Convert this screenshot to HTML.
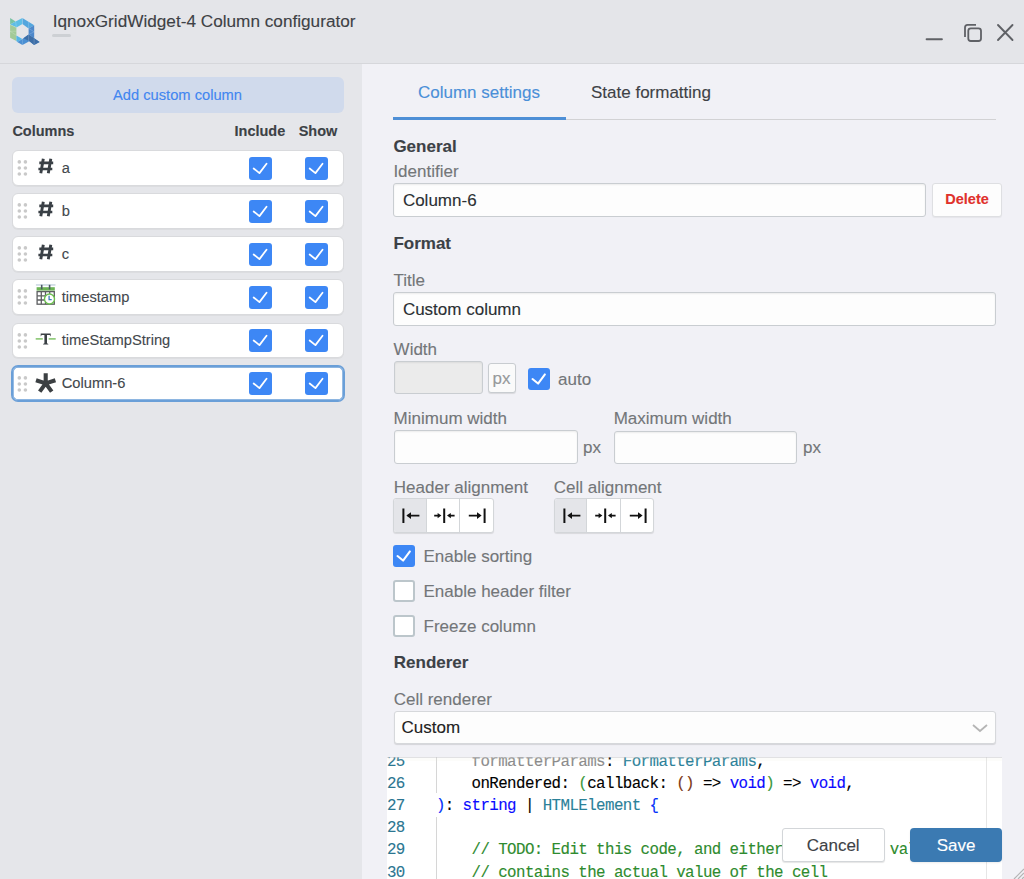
<!DOCTYPE html>
<html><head><meta charset="utf-8">
<style>
*{box-sizing:border-box;margin:0;padding:0}
html,body{width:1024px;height:879px;overflow:hidden;background:#f1f1f6;font-family:"Liberation Sans",sans-serif;color:#3c4146}
body div{-webkit-text-stroke:0.12px currentColor}
.abs{position:absolute}
#titlebar{position:absolute;left:0;top:0;width:1024px;height:64px;background:#e4e5e9;border-bottom:1px solid #d6d7db}
#left{position:absolute;left:0;top:64px;width:362px;height:815px;background:#e5e6ea}
#right{position:absolute;left:362.5px;top:64px;width:661.5px;height:815px;background:#f1f1f6}
.t17{font-size:17px;white-space:nowrap}
.lbl{color:#737679}
.h{font-weight:bold;color:#3c4146}
.row{position:absolute;left:12.3px;width:331.4px;height:35.4px;background:#fff;border:1px solid #d9dadd;border-radius:6px;box-shadow:0 1px 0 #dcdde0}
.row.sel{border:1px solid #6a9fd8;box-shadow:0 0 0 1px #6a9fd8,inset 0 0 0 0.7px #6a9fd8}
.dots{position:absolute;left:4.1px;top:9.1px;width:10px;height:16px}
.dots i{position:absolute;width:3.6px;height:3.6px;border-radius:50%;background:#c9c9c9}
.cb{position:absolute;width:22.8px;height:22.8px;background:#3d87f5;border-radius:3px}
.cb svg{position:absolute;left:0;top:0}
.rlab{position:absolute;left:48.4px;top:9.7px;line-height:14.7px;font-size:14.7px;color:#43484d;white-space:nowrap}
.inp{position:absolute;background:#fdfdfd;border:1px solid #c9cdd1;border-radius:3px;box-shadow:inset 0 1px 2px rgba(0,0,0,.07)}
.ucb{position:absolute;width:22px;height:22px;background:#fff;border:2px solid #bcc6cb;border-radius:3px}
</style></head>
<body>
<div id="titlebar">
  <svg class="abs" style="left:0;top:0" width="50" height="50" viewBox="0 0 50 50">
<polygon points="10.1,18.1 15.6,21.6 10.1,24.6" fill="#79c3a3"/>
<polygon points="10.1,24.6 15.6,21.6 22.4,18.0 22.4,24.0 16.4,27.4" fill="#5dbde6"/>
<polygon points="22.4,18.0 34.2,25.2 28.6,28.4 22.4,24.0" fill="#53a6de"/>
<polygon points="34.2,25.2 34.2,38.3 28.6,34.6 28.6,28.4" fill="#4d88cb"/>
<polygon points="10.1,24.6 16.4,27.4 16.4,41.0 10.1,37.8" fill="#a2ca97"/>
<polygon points="16.4,35.4 22.4,38.9 17.3,42.1 16.4,41.0" fill="#55b6e6"/>
<polygon points="22.4,38.9 28.6,34.6 34.2,38.3 39.6,42.1 34.1,44.9 29.4,41.3 22.4,45 17.3,42.1" fill="#4a8fd3"/>
<polygon points="23.4,38.3 28.6,34.6 34.2,38.3 39.6,42.1 34.1,44.9 29.4,41.3" fill="#3d6ea7"/>
<g stroke="rgba(255,255,255,.35)" stroke-width=".5" fill="none">
<path d="M10.1 24.6 L16.4 27.4 M15.6 21.6 L16.4 27.4 M22.4 18 V24 M28.6 21.6 V28.4 M28.6 28.4 L34.2 31.8 M28.6 34.6 L34.2 31.8 M28.6 34.6 V41.5 M34.1 38.3 V44.9 M22.4 38.9 V45 M16.4 31.2 L10.1 31.2 M10.1 31.2 L16.4 35.4"/>
</g>
</svg>
  <div class="abs" style="left:52.7px;top:13.1px;font-size:17.2px;line-height:17.2px;color:#3e4145;white-space:nowrap">IqnoxGridWidget-4 Column configurator</div>
  <div class="abs" style="left:52px;top:34px;width:19px;height:2.5px;border-radius:2px;background:#cdd0d4"></div>
  <svg class="abs" style="left:920px;top:18px" width="100" height="30" viewBox="0 0 100 30">
    <path d="M6.6 21.3H21.9" stroke="#5f6166" stroke-width="2" stroke-linecap="round"/>
    <path d="M45 19V9.5a2.6 2.6 0 0 1 2.6-2.6H56" stroke="#5f6166" stroke-width="1.8" fill="none"/>
    <rect x="48.3" y="10.3" width="12.7" height="12.7" rx="2.5" stroke="#5f6166" stroke-width="1.8" fill="none"/>
    <path d="M78 7 L92.5 22 M92.5 7 L78 22" stroke="#5f6166" stroke-width="1.9" stroke-linecap="round"/>
  </svg>
</div>
<div id="left"></div>
<div class="abs" style="left:12px;top:77px;width:332px;height:36px;background:#d0daec;border-radius:6px"></div>
<div class="abs" style="left:11.5px;top:87.5px;width:332px;text-align:center;font-size:14.7px;line-height:14.7px;color:#4286f0;white-space:nowrap">Add custom column</div>
<div class="abs h" style="left:12.4px;top:123.7px;font-size:14.5px;line-height:14.5px">Columns</div>
<div class="abs h" style="left:234.5px;top:123.7px;font-size:14.5px;line-height:14.5px">Include</div>
<div class="abs h" style="left:298.7px;top:123.7px;font-size:14.5px;line-height:14.5px">Show</div>
<div class="row" style="top:150.3px"><svg class="abs" style="left:0;top:0" width="20" height="35" viewBox="0 0 20 35"><g fill="#c9c9c9"><circle cx="6.3" cy="10.9" r="1.8"/><circle cx="12.4" cy="10.9" r="1.8"/><circle cx="6.3" cy="16.95" r="1.8"/><circle cx="12.4" cy="16.95" r="1.8"/><circle cx="6.3" cy="23" r="1.8"/><circle cx="12.4" cy="23" r="1.8"/></g></svg><svg class="abs" style="left:0;top:0;overflow:visible" width="50" height="35" viewBox="13.3 151.5 50 35"><path d="M43.6 159.2 L41.1 173.8 M51.1 159.2 L48.6 173.8" stroke="#3a4046" stroke-width="2.9" stroke-linecap="butt"/><path d="M39.6 163.4 H53.5 M38.7 169.5 H52.6" stroke="#3a4046" stroke-width="2.7" stroke-linecap="butt"/></svg><div class="rlab">a</div><div class="cb" style="left:236px;top:5.6px"><svg width="22.8" height="22.8" viewBox="0 0 22.5 22.5"><path d="M4.6 11.3 L10.3 15.9 L17.3 6.6" stroke="#fff" stroke-width="1.75" fill="none" stroke-linecap="round" stroke-linejoin="round"/></svg></div><div class="cb" style="left:291.6px;top:5.6px"><svg width="22.8" height="22.8" viewBox="0 0 22.5 22.5"><path d="M4.6 11.3 L10.3 15.9 L17.3 6.6" stroke="#fff" stroke-width="1.75" fill="none" stroke-linecap="round" stroke-linejoin="round"/></svg></div></div>
<div class="row" style="top:193.35px"><svg class="abs" style="left:0;top:0" width="20" height="35" viewBox="0 0 20 35"><g fill="#c9c9c9"><circle cx="6.3" cy="10.9" r="1.8"/><circle cx="12.4" cy="10.9" r="1.8"/><circle cx="6.3" cy="16.95" r="1.8"/><circle cx="12.4" cy="16.95" r="1.8"/><circle cx="6.3" cy="23" r="1.8"/><circle cx="12.4" cy="23" r="1.8"/></g></svg><svg class="abs" style="left:0;top:0;overflow:visible" width="50" height="35" viewBox="13.3 194.5 50 35"><path d="M43.6 202.2 L41.1 216.8 M51.1 202.2 L48.6 216.8" stroke="#3a4046" stroke-width="2.9" stroke-linecap="butt"/><path d="M39.6 206.4 H53.5 M38.7 212.5 H52.6" stroke="#3a4046" stroke-width="2.7" stroke-linecap="butt"/></svg><div class="rlab">b</div><div class="cb" style="left:236px;top:5.6px"><svg width="22.8" height="22.8" viewBox="0 0 22.5 22.5"><path d="M4.6 11.3 L10.3 15.9 L17.3 6.6" stroke="#fff" stroke-width="1.75" fill="none" stroke-linecap="round" stroke-linejoin="round"/></svg></div><div class="cb" style="left:291.6px;top:5.6px"><svg width="22.8" height="22.8" viewBox="0 0 22.5 22.5"><path d="M4.6 11.3 L10.3 15.9 L17.3 6.6" stroke="#fff" stroke-width="1.75" fill="none" stroke-linecap="round" stroke-linejoin="round"/></svg></div></div>
<div class="row" style="top:236.4px"><svg class="abs" style="left:0;top:0" width="20" height="35" viewBox="0 0 20 35"><g fill="#c9c9c9"><circle cx="6.3" cy="10.9" r="1.8"/><circle cx="12.4" cy="10.9" r="1.8"/><circle cx="6.3" cy="16.95" r="1.8"/><circle cx="12.4" cy="16.95" r="1.8"/><circle cx="6.3" cy="23" r="1.8"/><circle cx="12.4" cy="23" r="1.8"/></g></svg><svg class="abs" style="left:0;top:0;overflow:visible" width="50" height="35" viewBox="13.3 237.5 50 35"><path d="M43.6 245.2 L41.1 259.8 M51.1 245.2 L48.6 259.8" stroke="#3a4046" stroke-width="2.9" stroke-linecap="butt"/><path d="M39.6 249.4 H53.5 M38.7 255.5 H52.6" stroke="#3a4046" stroke-width="2.7" stroke-linecap="butt"/></svg><div class="rlab">c</div><div class="cb" style="left:236px;top:5.6px"><svg width="22.8" height="22.8" viewBox="0 0 22.5 22.5"><path d="M4.6 11.3 L10.3 15.9 L17.3 6.6" stroke="#fff" stroke-width="1.75" fill="none" stroke-linecap="round" stroke-linejoin="round"/></svg></div><div class="cb" style="left:291.6px;top:5.6px"><svg width="22.8" height="22.8" viewBox="0 0 22.5 22.5"><path d="M4.6 11.3 L10.3 15.9 L17.3 6.6" stroke="#fff" stroke-width="1.75" fill="none" stroke-linecap="round" stroke-linejoin="round"/></svg></div></div>
<div class="row" style="top:279.45px"><svg class="abs" style="left:0;top:0" width="20" height="35" viewBox="0 0 20 35"><g fill="#c9c9c9"><circle cx="6.3" cy="10.9" r="1.8"/><circle cx="12.4" cy="10.9" r="1.8"/><circle cx="6.3" cy="16.95" r="1.8"/><circle cx="12.4" cy="16.95" r="1.8"/><circle cx="6.3" cy="23" r="1.8"/><circle cx="12.4" cy="23" r="1.8"/></g></svg><svg class="abs" style="left:0;top:0;overflow:visible" width="50" height="35" viewBox="13.3 280.5 50 35"><g transform="translate(0,-0.5)"><rect x="36.2" y="285.2" width="19.6" height="1.5" fill="#c9d6e2"/>
<rect x="36.9" y="288.2" width="18.2" height="3.4" fill="#6cb455"/>
<rect x="41.2" y="285.8" width="1.6" height="4.6" fill="#4a5a62"/><rect x="49.1" y="285.8" width="1.6" height="4.6" fill="#4a5a62"/>
<rect x="37.4" y="292.6" width="17.2" height="12.6" fill="#fff" stroke="#5d5f61" stroke-width="1.3"/>
<path d="M37.4 296.9 H54.6 M37.4 301 H54.6 M41.6 292.6 V305.2 M45.8 292.6 V305.2 M50 292.6 V305.2" stroke="#5d5f61" stroke-width="1.3"/>
<circle cx="49.8" cy="300" r="5" fill="#fff" stroke="#6bbf4e" stroke-width="1.4"/>
<path d="M49.4 296.8 V300.6 H52" stroke="#3d7fb8" stroke-width="1.3" fill="none"/></g></svg><div class="rlab">timestamp</div><div class="cb" style="left:236px;top:5.6px"><svg width="22.8" height="22.8" viewBox="0 0 22.5 22.5"><path d="M4.6 11.3 L10.3 15.9 L17.3 6.6" stroke="#fff" stroke-width="1.75" fill="none" stroke-linecap="round" stroke-linejoin="round"/></svg></div><div class="cb" style="left:291.6px;top:5.6px"><svg width="22.8" height="22.8" viewBox="0 0 22.5 22.5"><path d="M4.6 11.3 L10.3 15.9 L17.3 6.6" stroke="#fff" stroke-width="1.75" fill="none" stroke-linecap="round" stroke-linejoin="round"/></svg></div></div>
<div class="row" style="top:322.5px"><svg class="abs" style="left:0;top:0" width="20" height="35" viewBox="0 0 20 35"><g fill="#c9c9c9"><circle cx="6.3" cy="10.9" r="1.8"/><circle cx="12.4" cy="10.9" r="1.8"/><circle cx="6.3" cy="16.95" r="1.8"/><circle cx="12.4" cy="16.95" r="1.8"/><circle cx="6.3" cy="23" r="1.8"/><circle cx="12.4" cy="23" r="1.8"/></g></svg><svg class="abs" style="left:0;top:0;overflow:visible" width="50" height="35" viewBox="13.3 323.5 50 35"><path d="M36 338.4 H43.1 M49 338.4 H56" stroke="#93cb7e" stroke-width="1.8"/>
<path d="M41 332.9 H51 V336 L50 334.4 H47.3 V342.8 L48.6 343.4 V343.9 H43.4 V343.4 L44.7 342.8 V334.4 H42 L41 336Z" fill="#3a3f44"/></svg><div class="rlab">timeStampString</div><div class="cb" style="left:236px;top:5.6px"><svg width="22.8" height="22.8" viewBox="0 0 22.5 22.5"><path d="M4.6 11.3 L10.3 15.9 L17.3 6.6" stroke="#fff" stroke-width="1.75" fill="none" stroke-linecap="round" stroke-linejoin="round"/></svg></div><div class="cb" style="left:291.6px;top:5.6px"><svg width="22.8" height="22.8" viewBox="0 0 22.5 22.5"><path d="M4.6 11.3 L10.3 15.9 L17.3 6.6" stroke="#fff" stroke-width="1.75" fill="none" stroke-linecap="round" stroke-linejoin="round"/></svg></div></div>
<div class="row sel" style="top:365.55px"><svg class="abs" style="left:0;top:0" width="20" height="35" viewBox="0 0 20 35"><g fill="#c9c9c9"><circle cx="6.3" cy="10.9" r="1.8"/><circle cx="12.4" cy="10.9" r="1.8"/><circle cx="6.3" cy="16.95" r="1.8"/><circle cx="12.4" cy="16.95" r="1.8"/><circle cx="6.3" cy="23" r="1.8"/><circle cx="12.4" cy="23" r="1.8"/></g></svg><svg class="abs" style="left:0;top:0;overflow:visible" width="50" height="35" viewBox="13.3 366.5 50 35"><path d="M46.00 382.90 L46.00 372.70 M46.00 382.90 L55.70 379.75 M46.00 382.90 L52.00 391.15 M46.00 382.90 L40.00 391.15 M46.00 382.90 L36.30 379.75 " stroke="#3c4043" stroke-width="4.1" stroke-linecap="butt"/><circle cx="46.0" cy="382.9" r="2.5" fill="#3c4043"/></svg><div class="rlab">Column-6</div><div class="cb" style="left:236px;top:5.6px"><svg width="22.8" height="22.8" viewBox="0 0 22.5 22.5"><path d="M4.6 11.3 L10.3 15.9 L17.3 6.6" stroke="#fff" stroke-width="1.75" fill="none" stroke-linecap="round" stroke-linejoin="round"/></svg></div><div class="cb" style="left:291.6px;top:5.6px"><svg width="22.8" height="22.8" viewBox="0 0 22.5 22.5"><path d="M4.6 11.3 L10.3 15.9 L17.3 6.6" stroke="#fff" stroke-width="1.75" fill="none" stroke-linecap="round" stroke-linejoin="round"/></svg></div></div>
<div id="right"></div>
<div class="abs " style="left:418px;top:84.4px;font-size:17px;line-height:17px;white-space:nowrap;color:#4a8fd8">Column settings</div>
<div class="abs " style="left:591px;top:84.4px;font-size:17px;line-height:17px;white-space:nowrap;color:#3e4246">State formatting</div>
<div class="abs" style="left:393px;top:118.6px;width:603px;height:1.4px;background:#d2d2d4"></div>
<div class="abs" style="left:393px;top:116.8px;width:173px;height:3.3px;background:#4e8fd6"></div>
<div class="abs h" style="left:393.4px;top:137.6px;font-size:17px;line-height:17px;white-space:nowrap;">General</div>
<div class="abs lbl" style="left:393.4px;top:162.6px;font-size:17px;line-height:17px;white-space:nowrap;">Identifier</div>
<div class="inp" style="left:393px;top:183.3px;width:532.5px;height:34px"></div>
<div class="abs " style="left:402.9px;top:191.6px;font-size:17px;line-height:17px;white-space:nowrap;color:#2b2f33">Column-6</div>
<div class="inp" style="left:932.4px;top:183.3px;width:70px;height:34px;box-shadow:0 1px 1px rgba(0,0,0,.05);border-color:#dedfe2"></div>
<div class="abs " style="left:945.3px;top:191.5px;font-size:14.5px;line-height:14.5px;white-space:nowrap;color:#e0312b;font-weight:bold">Delete</div>
<div class="abs h" style="left:393.4px;top:234.6px;font-size:17px;line-height:17px;white-space:nowrap;">Format</div>
<div class="abs lbl" style="left:393.4px;top:271.6px;font-size:17px;line-height:17px;white-space:nowrap;">Title</div>
<div class="inp" style="left:393px;top:292.4px;width:602.5px;height:33.2px"></div>
<div class="abs " style="left:402.9px;top:300.6px;font-size:17px;line-height:17px;white-space:nowrap;color:#2b2f33">Custom column</div>
<div class="abs lbl" style="left:393.6px;top:340.6px;font-size:17px;line-height:17px;white-space:nowrap;">Width</div>
<div class="inp" style="left:393.6px;top:361.2px;width:89px;height:33.2px;background:#ebebeb"></div>
<div class="inp" style="left:488.3px;top:363.2px;width:27.4px;height:29.4px;background:#fafafa;box-shadow:0 1px 1px rgba(0,0,0,.1);border-color:#c8ccd0"></div>
<div class="abs " style="left:492.6px;top:369.6px;font-size:17px;line-height:17px;white-space:nowrap;color:#97999b">px</div>
<div class="cb" style="left:528.3px;top:368.2px;width:22px;height:22px"><svg width="22" height="22" viewBox="0 0 22.5 22.5"><path d="M4.6 11.3 L10.3 15.9 L17.3 6.6" stroke="#fff" stroke-width="2.1" fill="none" stroke-linecap="round" stroke-linejoin="round"/></svg></div>
<div class="abs lbl" style="left:558px;top:370.6px;font-size:17px;line-height:17px;white-space:nowrap;">auto</div>
<div class="abs lbl" style="left:393.6px;top:410.0px;font-size:17px;line-height:17px;white-space:nowrap;">Minimum width</div>
<div class="inp" style="left:393.6px;top:430.3px;width:184px;height:33.3px"></div>
<div class="abs lbl" style="left:583px;top:438.6px;font-size:17px;line-height:17px;white-space:nowrap;">px</div>
<div class="abs lbl" style="left:613.7px;top:410.0px;font-size:17px;line-height:17px;white-space:nowrap;">Maximum width</div>
<div class="inp" style="left:613.7px;top:430.5px;width:183.8px;height:33px"></div>
<div class="abs lbl" style="left:803px;top:438.6px;font-size:17px;line-height:17px;white-space:nowrap;">px</div>
<div class="abs lbl" style="left:393.8px;top:478.8px;font-size:17px;line-height:17px;white-space:nowrap;">Header alignment</div>
<div class="abs lbl" style="left:553.8px;top:478.8px;font-size:17px;line-height:17px;white-space:nowrap;">Cell alignment</div>
<div class="abs" style="left:393.4px;top:498.3px;width:100.3px;height:34.8px;background:#fff;border:1px solid #d3d6d9;border-radius:3px;box-shadow:0 1px 1px rgba(0,0,0,.1);overflow:hidden">
<div class="abs" style="left:0;top:0;width:32.5px;height:100%;background:#e4e5e9;border-right:1px solid #d3d6d9"></div>
<div class="abs" style="left:64.8px;top:0;width:1px;height:100%;background:#d3d6d9"></div>
<svg class="abs" style="left:-0.3px;top:-0.8px" width="100" height="34" viewBox="0 0 100 34">
<path d="M9.4 9.4V24" stroke="#111" stroke-width="2"/><path d="M13.6 16.6H25.4" stroke="#111" stroke-width="1.9"/><path d="M12.4 16.6 L17 13.3 V19.9Z" fill="#111"/>
<path d="M50.2 9.4V24" stroke="#111" stroke-width="2"/><path d="M40.2 16.6H45" stroke="#111" stroke-width="1.7"/><path d="M47.4 16.6 L43.6 13.9 V19.3Z" fill="#111"/><path d="M55.5 16.6H60.6" stroke="#111" stroke-width="1.7"/><path d="M53 16.6 L56.8 13.9 V19.3Z" fill="#111"/>
<path d="M90.6 9.4V24" stroke="#111" stroke-width="2"/><path d="M74.8 16.6H86" stroke="#111" stroke-width="1.9"/><path d="M87.6 16.6 L83 13.3 V19.9Z" fill="#111"/>
</svg></div>
<div class="abs" style="left:553.8px;top:498.3px;width:100.3px;height:34.8px;background:#fff;border:1px solid #d3d6d9;border-radius:3px;box-shadow:0 1px 1px rgba(0,0,0,.1);overflow:hidden">
<div class="abs" style="left:0;top:0;width:32.5px;height:100%;background:#e4e5e9;border-right:1px solid #d3d6d9"></div>
<div class="abs" style="left:64.8px;top:0;width:1px;height:100%;background:#d3d6d9"></div>
<svg class="abs" style="left:-0.3px;top:-0.8px" width="100" height="34" viewBox="0 0 100 34">
<path d="M9.4 9.4V24" stroke="#111" stroke-width="2"/><path d="M13.6 16.6H25.4" stroke="#111" stroke-width="1.9"/><path d="M12.4 16.6 L17 13.3 V19.9Z" fill="#111"/>
<path d="M50.2 9.4V24" stroke="#111" stroke-width="2"/><path d="M40.2 16.6H45" stroke="#111" stroke-width="1.7"/><path d="M47.4 16.6 L43.6 13.9 V19.3Z" fill="#111"/><path d="M55.5 16.6H60.6" stroke="#111" stroke-width="1.7"/><path d="M53 16.6 L56.8 13.9 V19.3Z" fill="#111"/>
<path d="M90.6 9.4V24" stroke="#111" stroke-width="2"/><path d="M74.8 16.6H86" stroke="#111" stroke-width="1.9"/><path d="M87.6 16.6 L83 13.3 V19.9Z" fill="#111"/>
</svg></div>
<div class="cb" style="left:393.2px;top:545.4px;width:21.7px;height:21.5px"><svg width="22" height="22" viewBox="0 0 22.5 22.5"><path d="M4.6 11.3 L10.3 15.9 L17.3 6.6" stroke="#fff" stroke-width="2.1" fill="none" stroke-linecap="round" stroke-linejoin="round"/></svg></div>
<div class="abs lbl" style="left:423.5px;top:548.0px;font-size:17px;line-height:17px;white-space:nowrap;">Enable sorting</div>
<div class="ucb" style="left:393.2px;top:580px;width:21.7px;height:21.5px"></div>
<div class="abs lbl" style="left:423.5px;top:582.6px;font-size:17px;line-height:17px;white-space:nowrap;">Enable header filter</div>
<div class="ucb" style="left:393.2px;top:615px;width:21.7px;height:21.5px"></div>
<div class="abs lbl" style="left:423.5px;top:617.6px;font-size:17px;line-height:17px;white-space:nowrap;">Freeze column</div>
<div class="abs h" style="left:393.8px;top:653.8px;font-size:17px;line-height:17px;white-space:nowrap;">Renderer</div>
<div class="abs lbl" style="left:393.7px;top:691.4px;font-size:17px;line-height:17px;white-space:nowrap;">Cell renderer</div>
<div class="inp" style="left:393.7px;top:711.2px;width:602px;height:32.7px;box-shadow:0 1px 1px rgba(0,0,0,.12);border-color:#d6d8db"></div>
<div class="abs " style="left:401.5px;top:718.7px;font-size:17px;line-height:17px;white-space:nowrap;color:#222">Custom</div>
<svg class="abs" style="left:970px;top:720px" width="20" height="16" viewBox="0 0 20 16"><path d="M3 5 L10 11 L17 5" stroke="#b5b5b5" stroke-width="1.8" fill="none"/></svg>
<!--EDITOR-->
<div class="abs" style="left:386.9px;top:756.8px;width:615px;height:122.20000000000005px;background:#fff;overflow:hidden">
<div class="abs" style="left:49.00px;top:0;width:1px;height:36.6px;background:#d6d6d6"></div>
<div class="abs" style="left:49.00px;top:60.30px;width:1px;height:80px;background:#d6d6d6"></div>
<div class="abs" style="left:598.7px;top:0;width:1.2px;height:130px;background:#e6e6e6"></div>
<div style="position:absolute;font-family:'Liberation Mono',monospace;font-size:15.800px;line-height:22.14px;white-space:pre;letter-spacing:-0.580px;left:0.00px;top:-5.88px;color:#2b7691">25</div>
<div style="position:absolute;font-family:'Liberation Mono',monospace;font-size:15.800px;line-height:22.14px;white-space:pre;letter-spacing:-0.580px;left:49.00px;top:-5.88px;color:#000">    <span style="color:#8b8b8b">formatterParams</span>: <span style="color:#2b8199">FormatterParams</span>,</div>
<div style="position:absolute;font-family:'Liberation Mono',monospace;font-size:15.800px;line-height:22.14px;white-space:pre;letter-spacing:-0.580px;left:0.00px;top:16.26px;color:#2b7691">26</div>
<div style="position:absolute;font-family:'Liberation Mono',monospace;font-size:15.800px;line-height:22.14px;white-space:pre;letter-spacing:-0.580px;left:49.00px;top:16.26px;color:#000">    onRendered: <span style="color:#3b983b">(</span>callback: <span style="color:#7b3814">()</span> =&gt; <span style="color:#0a0aff">void</span><span style="color:#3b983b">)</span> =&gt; <span style="color:#0a0aff">void</span>,</div>
<div style="position:absolute;font-family:'Liberation Mono',monospace;font-size:15.800px;line-height:22.14px;white-space:pre;letter-spacing:-0.580px;left:0.00px;top:38.40px;color:#2b7691">27</div>
<div style="position:absolute;font-family:'Liberation Mono',monospace;font-size:15.800px;line-height:22.14px;white-space:pre;letter-spacing:-0.580px;left:49.00px;top:38.40px;color:#000"><span style="color:#0431fa">)</span>: <span style="color:#0a0aff">string</span> | <span style="color:#2b8199">HTMLElement</span> <span style="color:#0431fa">{</span></div>
<div style="position:absolute;font-family:'Liberation Mono',monospace;font-size:15.800px;line-height:22.14px;white-space:pre;letter-spacing:-0.580px;left:0.00px;top:60.54px;color:#2b7691">28</div>
<div style="position:absolute;font-family:'Liberation Mono',monospace;font-size:15.800px;line-height:22.14px;white-space:pre;letter-spacing:-0.580px;left:49.00px;top:60.54px;color:#000"></div>
<div style="position:absolute;font-family:'Liberation Mono',monospace;font-size:15.800px;line-height:22.14px;white-space:pre;letter-spacing:-0.580px;left:0.00px;top:82.68px;color:#2b7691">29</div>
<div style="position:absolute;font-family:'Liberation Mono',monospace;font-size:15.800px;line-height:22.14px;white-space:pre;letter-spacing:-0.580px;left:49.00px;top:82.68px;color:#000">    <span style="color:#2e8b2e">// TODO: Edit this code, and either return the value</span></div>
<div style="position:absolute;font-family:'Liberation Mono',monospace;font-size:15.800px;line-height:22.14px;white-space:pre;letter-spacing:-0.580px;left:0.00px;top:104.82px;color:#2b7691">30</div>
<div style="position:absolute;font-family:'Liberation Mono',monospace;font-size:15.800px;line-height:22.14px;white-space:pre;letter-spacing:-0.580px;left:49.00px;top:104.82px;color:#000">    <span style="color:#2e8b2e">// contains the actual value of the cell</span></div>
<div class="abs" style="left:0;top:0;width:100%;height:1.5px;background:rgba(200,200,204,.55)"></div>
<div class="abs" style="left:0;top:1.5px;width:100%;height:3px;background:rgba(230,230,210,.12)"></div>
</div>
<!--/EDITOR-->
<div class="abs" style="left:781.7px;top:827.9px;width:103px;height:34.2px;background:#fff;border:1px solid #d3d6d9;border-radius:3px;box-shadow:0 1px 1px rgba(0,0,0,.1)"></div>
<div class="abs" style="left:781.7px;top:836.6px;width:103px;text-align:center;font-size:17px;line-height:17px;color:#3e4246">Cancel</div>
<div class="abs" style="left:910.2px;top:828px;width:91.9px;height:34.3px;background:#3b7ab2;border-radius:4px;box-shadow:0 1px 2px rgba(0,0,0,.08)"></div>
<div class="abs" style="left:910.2px;top:836.6px;width:91.9px;text-align:center;font-size:17px;line-height:17px;color:#fff">Save</div>
<svg class="abs" style="left:1010px;top:865px" width="14" height="14" viewBox="0 0 14 14"><path d="M4 14 L14 4 M8 14 L14 8 M12 14 L14 12" stroke="#b4b4b4" stroke-width="1.2"/></svg>
</body></html>
